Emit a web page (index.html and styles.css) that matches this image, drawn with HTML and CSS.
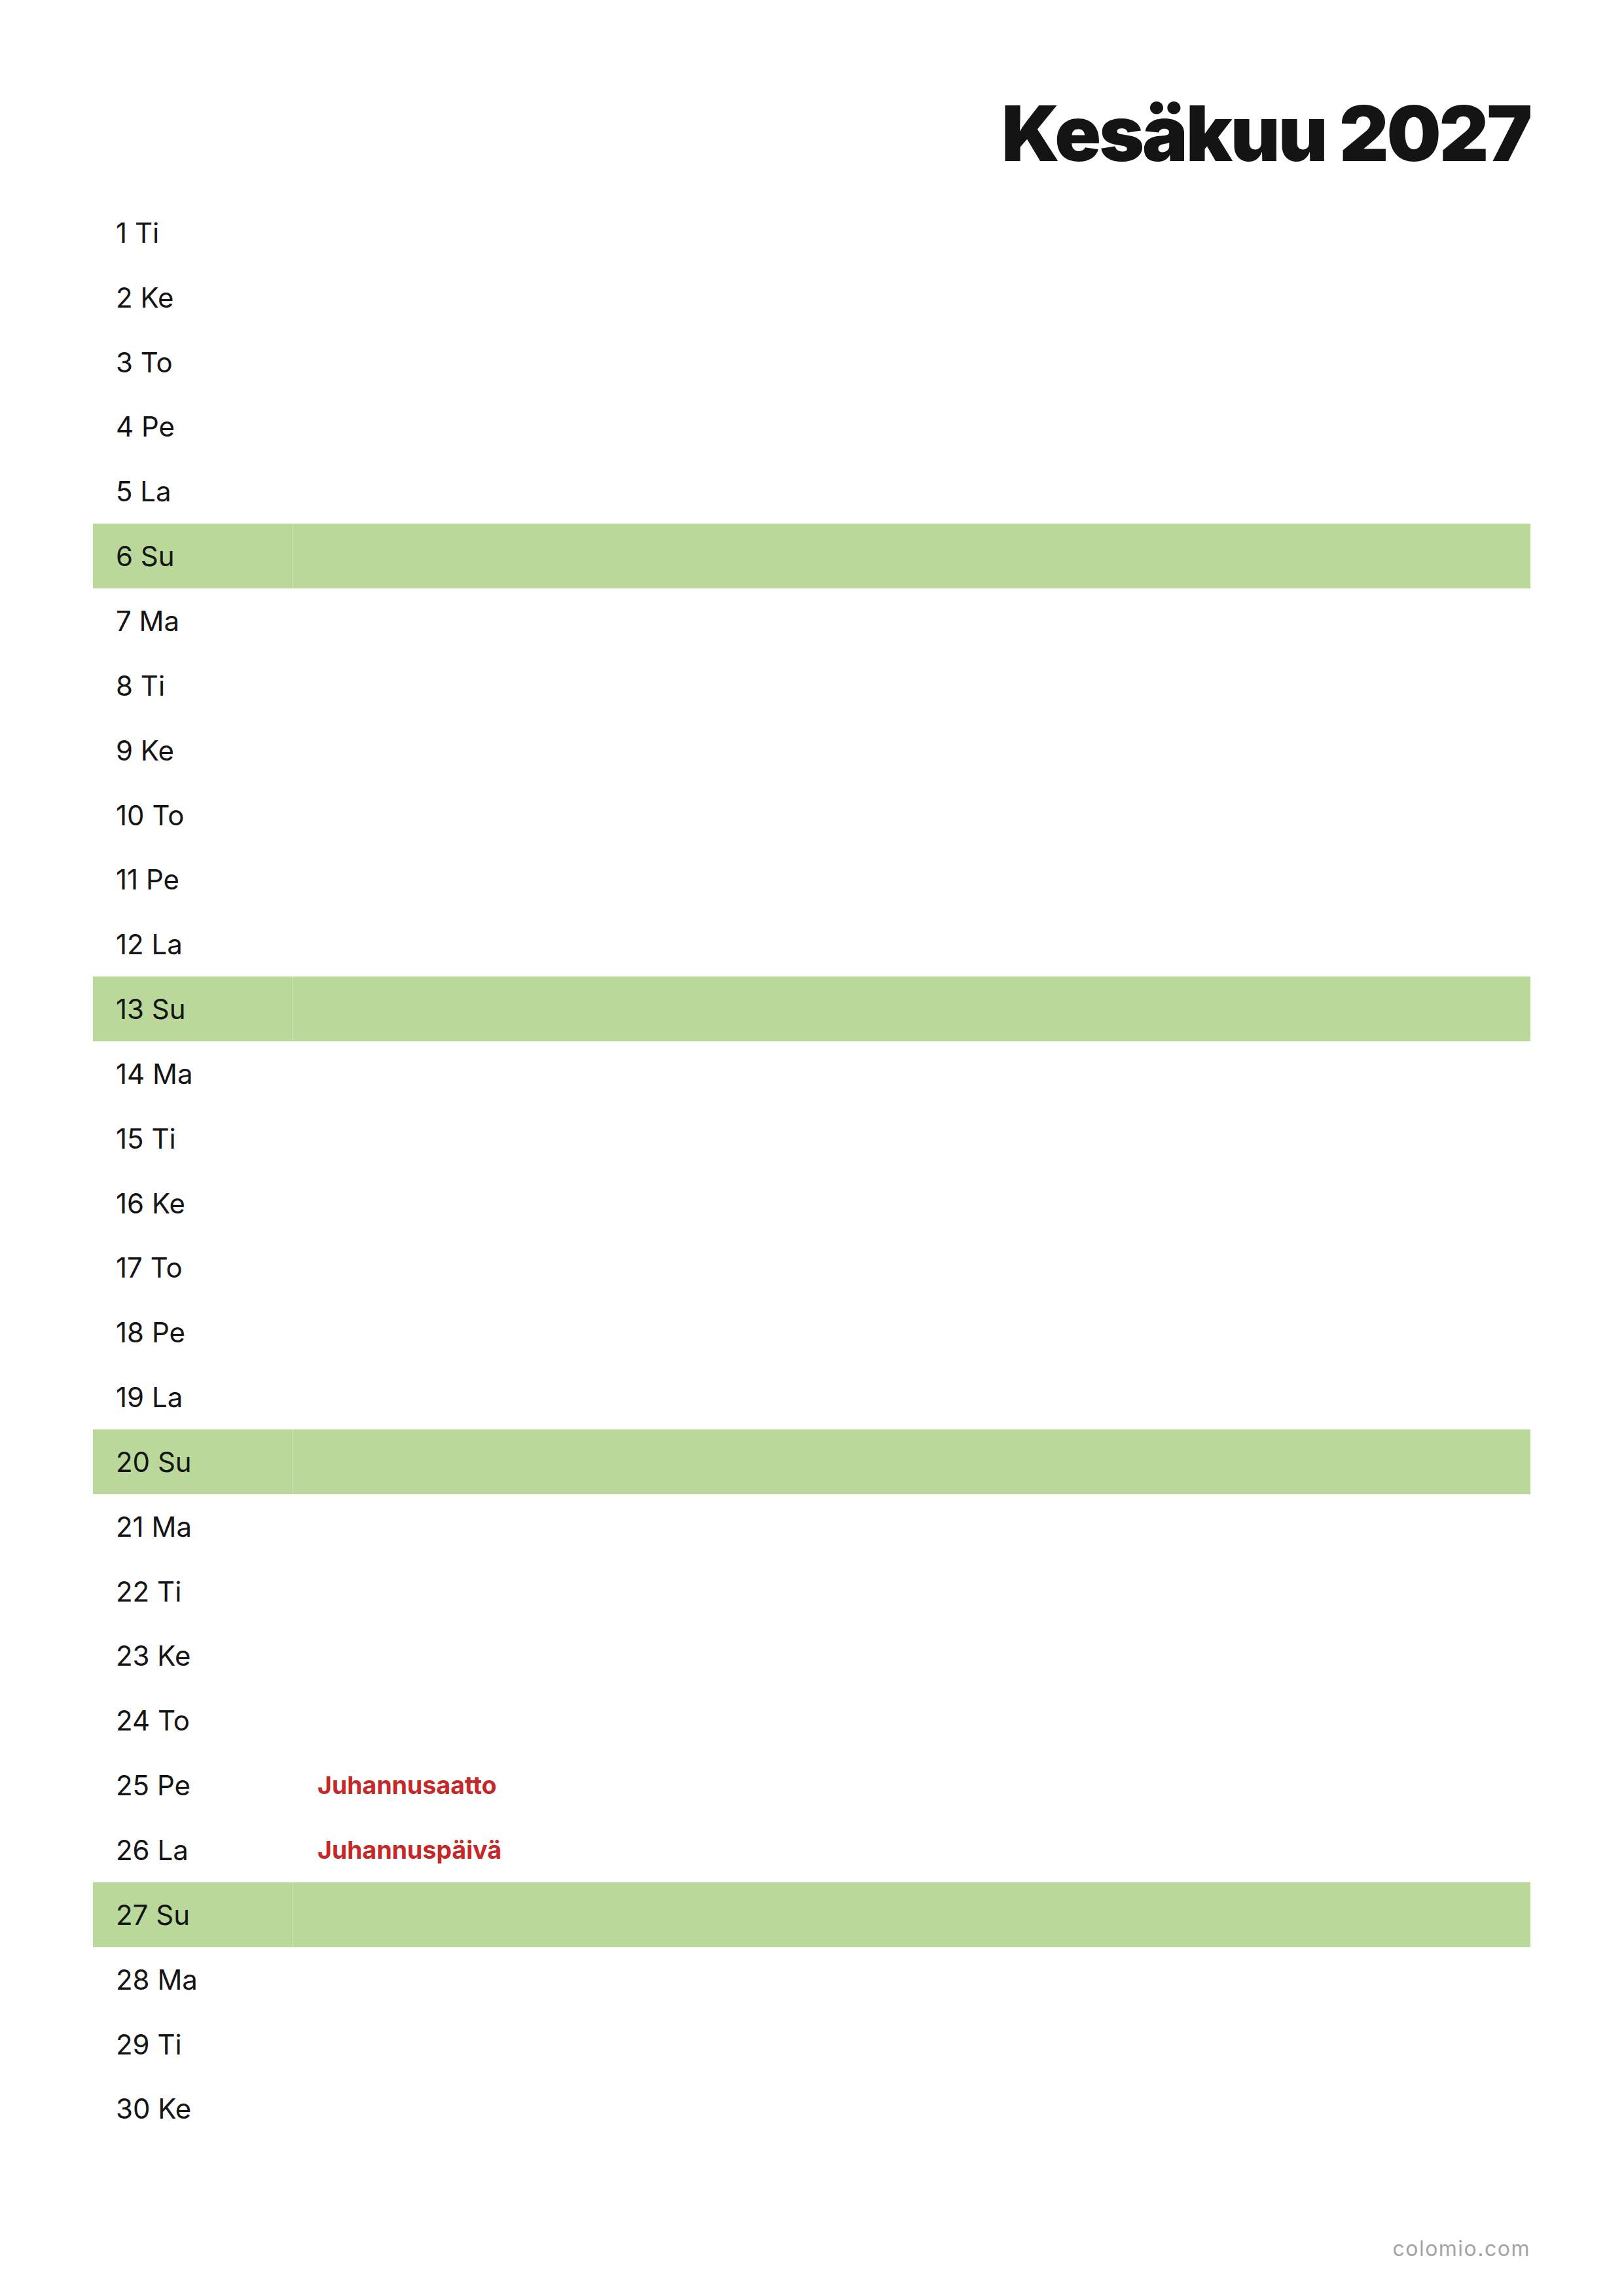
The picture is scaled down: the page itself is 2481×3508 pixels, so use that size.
FILE: index.html
```html
<!DOCTYPE html>
<html lang="fi">
<head>
<meta charset="utf-8">
<title>Kesäkuu 2027</title>
<link rel="stylesheet" href="styles.css">
</head>
<body>
<div class="page">
  <header class="header"><h1 class="title">Kesäkuu 2027</h1></header>
  <div class="rows">
    <div class="row"><div class="day">1 Ti</div><div class="note"></div></div>
    <div class="row"><div class="day">2 Ke</div><div class="note"></div></div>
    <div class="row"><div class="day">3 To</div><div class="note"></div></div>
    <div class="row"><div class="day">4 Pe</div><div class="note"></div></div>
    <div class="row"><div class="day">5 La</div><div class="note"></div></div>
    <div class="row sunday"><div class="day">6 Su</div><div class="note"></div></div>
    <div class="row"><div class="day">7 Ma</div><div class="note"></div></div>
    <div class="row"><div class="day">8 Ti</div><div class="note"></div></div>
    <div class="row"><div class="day">9 Ke</div><div class="note"></div></div>
    <div class="row"><div class="day">10 To</div><div class="note"></div></div>
    <div class="row"><div class="day">11 Pe</div><div class="note"></div></div>
    <div class="row"><div class="day">12 La</div><div class="note"></div></div>
    <div class="row sunday"><div class="day">13 Su</div><div class="note"></div></div>
    <div class="row"><div class="day">14 Ma</div><div class="note"></div></div>
    <div class="row"><div class="day">15 Ti</div><div class="note"></div></div>
    <div class="row"><div class="day">16 Ke</div><div class="note"></div></div>
    <div class="row"><div class="day">17 To</div><div class="note"></div></div>
    <div class="row"><div class="day">18 Pe</div><div class="note"></div></div>
    <div class="row"><div class="day">19 La</div><div class="note"></div></div>
    <div class="row sunday"><div class="day">20 Su</div><div class="note"></div></div>
    <div class="row"><div class="day">21 Ma</div><div class="note"></div></div>
    <div class="row"><div class="day">22 Ti</div><div class="note"></div></div>
    <div class="row"><div class="day">23 Ke</div><div class="note"></div></div>
    <div class="row"><div class="day">24 To</div><div class="note"></div></div>
    <div class="row"><div class="day">25 Pe</div><div class="note holiday">Juhannusaatto</div></div>
    <div class="row"><div class="day">26 La</div><div class="note holiday">Juhannuspäivä</div></div>
    <div class="row sunday"><div class="day">27 Su</div><div class="note"></div></div>
    <div class="row"><div class="day">28 Ma</div><div class="note"></div></div>
    <div class="row"><div class="day">29 Ti</div><div class="note"></div></div>
    <div class="row"><div class="day">30 Ke</div><div class="note"></div></div>
  </div>
  <footer class="footer">colomio.com</footer>
</div>
</body>
</html>
```
FILE: styles.css
```css
* { box-sizing: border-box; }
html, body { margin: 0; padding: 0; background: #ffffff; }
body { font-family: Inter, "Liberation Sans", sans-serif; color: #151515; }
.page {
  width: 2481px;
  height: 3508px;
  padding: 0 143px 0 142px;
}
.header {
  height: 306px;
  padding-top: 145px;
  display: flex;
  justify-content: flex-end;
}
.title {
  margin: 0;
  font-size: 117px;
  line-height: 1;
  font-weight: 900;
  letter-spacing: -3px;
  color: #141414;
}
.rows { display: flex; flex-direction: column; }
.row {
  display: grid;
  grid-template-columns: 306px 1fr;
  height: 98.85px;
}
.day {
  display: flex;
  align-items: center;
  padding-left: 35px;
  font-size: 42px;
  font-weight: 400;
}
.note {
  display: flex;
  align-items: center;
  padding-left: 37px;
}
.sunday { background: #b9d89a; }
.sunday .day { border-right: 1px solid rgba(255,255,255,0.35); }
.holiday {
  color: #c62828;
  font-weight: 700;
  font-size: 37.5px;
}
.footer {
  margin-top: 149px;
  text-align: right;
  font-size: 32px;
  line-height: 1;
  letter-spacing: 1.5px;
  color: #a3a3a3;
}
```
